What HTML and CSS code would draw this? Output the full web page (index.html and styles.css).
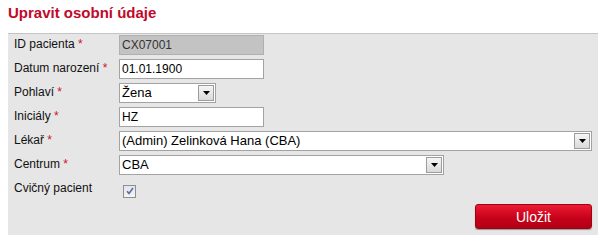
FILE: index.html
```html
<!DOCTYPE html>
<html lang="cs">
<head>
<meta charset="utf-8">
<title>Upravit osobní údaje</title>
<link rel="stylesheet" href="styles.css">
</head>
<body>
<h1 class="title">Upravit osobní údaje</h1>
<form class="panel">
  <div class="grid">
    <label class="lbl">ID pacienta <span class="req">*</span></label>
    <div class="field"><span class="input input-ro w-text">CX07001</span></div>

    <label class="lbl">Datum narození <span class="req">*</span></label>
    <div class="field"><span class="input w-text">01.01.1900</span></div>

    <label class="lbl">Pohlaví <span class="req">*</span></label>
    <div class="field"><span class="select w-sex"><span class="sel-text">Žena</span><span class="arrow"><svg width="7" height="4" viewBox="0 0 7 4"><path d="M0 0H7L3.5 4Z" fill="#000"/></svg></span></span></div>

    <label class="lbl">Iniciály <span class="req">*</span></label>
    <div class="field"><span class="input w-text">HZ</span></div>

    <label class="lbl">Lékař <span class="req">*</span></label>
    <div class="field"><span class="select w-full"><span class="sel-text">(Admin) Zelinková Hana (CBA)</span><span class="arrow"><svg width="7" height="4" viewBox="0 0 7 4"><path d="M0 0H7L3.5 4Z" fill="#000"/></svg></span></span></div>

    <label class="lbl">Centrum <span class="req">*</span></label>
    <div class="field"><span class="select w-center"><span class="sel-text">CBA</span><span class="arrow"><svg width="7" height="4" viewBox="0 0 7 4"><path d="M0 0H7L3.5 4Z" fill="#000"/></svg></span></span></div>

    <label class="lbl">Cvičný pacient</label>
    <div class="field"><span class="check"><svg width="8" height="8" viewBox="0 0 8 8"><path d="M1 4.2L3 6.4L7 1" fill="none" stroke="#5a6ea8" stroke-width="1.6"/></svg></span></div>
  </div>
  <div class="actions">
    <button type="button" class="btn">Uložit</button>
  </div>
</form>
</body>
</html>
```
FILE: styles.css
```css
html, body {
  margin: 0;
  padding: 0;
  background: #fff;
}
body {
  padding-left: 8px;
  font-family: "Liberation Sans", Arial, sans-serif;
  color: #000;
}
.title {
  margin: 0;
  height: 33px;
  padding-top: 4px;
  box-sizing: border-box;
  font-size: 15px;
  font-weight: bold;
  line-height: 18px;
  color: #c0092b;
}
.panel {
  width: 590px;
  box-sizing: border-box;
  background: #e6e6e6;
  border-top: 1px solid #c4c4c4;
  padding: 1px 6px 6px 6px;
}
.grid {
  display: grid;
  grid-template-columns: 105px 1fr;
  row-gap: 4px;
}
.lbl {
  font-size: 12px;
  line-height: 16px;
  padding-top: 1px;
  color: #111;
}
.req {
  color: #d0102a;
}
.field {
  height: 20px;
  display: flex;
  align-items: center;
}
.input {
  box-sizing: border-box;
  height: 20px;
  background: #fff;
  border: 1px solid #a3a3a3;
  font-size: 12px;
  line-height: 18px;
  padding-left: 2px;
  color: #000;
}
.input-ro {
  background: #c3c3c3;
  color: #333;
  border-color: #b0b0b0;
}
.w-text { width: 145px; }
.select {
  box-sizing: border-box;
  height: 20px;
  background: #fff;
  border: 1px solid #a3a3a3;
  display: flex;
  align-items: center;
  font-size: 13px;
}
.sel-text {
  flex: 1;
  padding-left: 2px;
  line-height: 18px;
  white-space: nowrap;
}
.arrow {
  box-sizing: border-box;
  width: 16px;
  height: 16px;
  margin-right: 1px;
  border: 1px solid #9c9c9c;
  background: linear-gradient(#f6f6f6, #d9d9d9);
  display: flex;
  align-items: center;
  justify-content: center;
}
.w-sex { width: 97px; }
.w-full { width: 473px; }
.w-center { width: 325px; }
.check {
  box-sizing: border-box;
  width: 13px;
  height: 13px;
  margin-left: 4px;
  margin-top: 4px;
  border: 1px solid #8f8f8f;
  background: linear-gradient(#e4e4ec, #f4f4f6);
  display: flex;
  align-items: center;
  justify-content: center;
}
.actions {
  display: flex;
  justify-content: flex-end;
  margin-top: 5px;
}
.btn {
  width: 117px;
  height: 25px;
  border: 1px solid #a00012;
  border-radius: 3px;
  background: linear-gradient(#ec1b33, #c7021a 55%, #b10014);
  box-shadow: 0 1px 1px rgba(0,0,0,0.35);
  color: #fff;
  font-family: "Liberation Sans", Arial, sans-serif;
  font-size: 14px;
  padding: 0;
}
```
